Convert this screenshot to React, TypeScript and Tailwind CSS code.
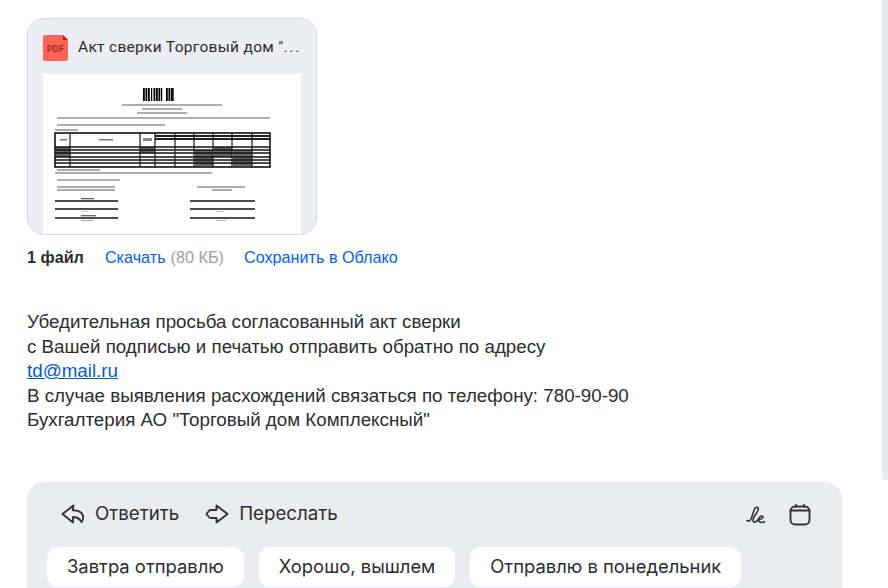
import React from 'react'

// Blurry preview of the attached PDF
function DocPreview() {
  const textLines = [
    [122, 105, 100],
    [142, 109, 40],
    [137, 113, 50],
    [57, 118, 213],
    [57, 125, 108],
    [55, 130, 23],
    [57, 170, 43],
    [55, 173, 157],
    [57, 180, 63],
    [57, 187, 58],
    [57, 190, 58],
    [197, 187, 48],
    [212, 190, 20],
  ]
  const barcode = [143, 145.5, 148, 151, 153.5, 156, 158.5, 161, 166, 168.5, 171, 172.5]
  const rows = [147, 150, 153, 157, 160, 163]
  const cols = [70, 140, 155, 175, 194, 213, 232, 252]
  const dark = [
    [56, 147, 14, 10],
    [195, 150, 18, 16],
    [214, 147, 18, 10],
    [233, 150, 19, 16],
    [140, 147, 15, 6],
  ]
  return (
    <svg width="258" height="160" viewBox="43 74 258 160" className="block bg-white">
      <defs>
        <filter id="soft">
          <feGaussianBlur stdDeviation="0.6" />
        </filter>
      </defs>
      <g filter="url(#soft)">
        {barcode.map((x, i) => (
          <rect key={x} x={x} y={88} width={i % 4 === 3 ? 1.2 : 1.8} height={13} fill="#000" />
        ))}
        {textLines.map(([x, y, w]) => (
          <rect key={`${x}-${y}`} x={x} y={y - 0.6} width={w} height={1.2} fill="#777" />
        ))}
        {dark.map(([x, y, w, h]) => (
          <rect key={`${x}-${y}`} x={x} y={y} width={w} height={h} fill="#666" />
        ))}
        <rect x={55} y={133} width={215} height={34} fill="none" stroke="#111" strokeWidth="1.6" />
        <line x1={155} y1={136} x2={270} y2={136} stroke="#222" strokeWidth="2" />
        <line x1={155} y1={139} x2={270} y2={139} stroke="#222" strokeWidth="2" />
        {rows.map((y) => (
          <line key={y} x1={55} y1={y} x2={270} y2={y} stroke="#111" strokeWidth="1.5" />
        ))}
        {cols.map((x) => (
          <line key={x} x1={x} y1={133} x2={x} y2={167} stroke="#222" strokeWidth="1.3" />
        ))}
        <rect x={60} y={139} width={7} height={1.5} fill="#777" />
        <rect x={99} y={139} width={14} height={1.5} fill="#777" />
        <rect x={143} y={138} width={9} height={3} fill="#888" />
        {[201, 209, 218].map((y) => (
          <g key={y}>
            <line x1={55} y1={y} x2={118} y2={y} stroke="#111" strokeWidth="1.5" />
            <line x1={190} y1={y} x2={255} y2={y} stroke="#111" strokeWidth="1.5" />
          </g>
        ))}
        <rect x={81} y={198} width={13} height={1.3} fill="#666" />
        <rect x={81} y={215} width={15} height={1.3} fill="#666" />
        <rect x={81} y={220} width={12} height={1} fill="#aaa" />
        <rect x={81} y={211} width={8} height={1} fill="#ccc" />
        <rect x={216} y={211} width={8} height={1} fill="#bbb" />
        <rect x={216} y={220} width={10} height={1} fill="#bbb" />
      </g>
    </svg>
  )
}

function PdfIcon() {
  return (
    <svg width="26" height="26" viewBox="0 0 26 26" className="shrink-0">
      <path d="M2 0h18l5 5v19a2 2 0 0 1-2 2H2a2 2 0 0 1-2-2V2a2 2 0 0 1 2-2z" fill="#ff6257" />
      <path d="M20 0l5 5h-5z" fill="#a3261d" />
      <text x="12.5" y="17" textAnchor="middle" fontSize="9.5" fontWeight="700" fill="#a82a20" fontFamily="Roboto, sans-serif">
        PDF
      </text>
    </svg>
  )
}

function ReplyIcon() {
  return (
    <svg width="24" height="20" viewBox="0 0 24 20" fill="none" stroke="#333" strokeWidth="1.9" strokeLinejoin="round" strokeLinecap="round">
      <path d="M12.5 1.5 1.5 10l10.5 8.5V13c3.5 0 6.500 1.500 8.500 5 1.500-1.500 2-3.500 1.500-6-.7-3.500-4.500-5.800-10.300-5.800z" />
    </svg>
  )
}

function ForwardIcon() {
  return (
    <svg width="24" height="20" viewBox="0 0 24 20" fill="none" stroke="#333" strokeWidth="1.9" strokeLinejoin="round" strokeLinecap="round">
      <path d="M11.5 1.5 22.5 10 11.5 18.5V14H6c-1 0-1.600-.3-2.200-1L1.500 10l2.300-3C4.400 6.300 5 6 6 6h5.500z" />
    </svg>
  )
}

function SignIcon() {
  return (
    <svg width="22" height="18" viewBox="0 0 22 18" fill="none" stroke="#333" strokeWidth="1.6" strokeLinecap="round" strokeLinejoin="round">
      <path d="M1 14.500c1.500 1 3 .5 4-1.500 1.200-2.500 2.200-6.500 3.500-10 .8-2 3.500-2.500 3.800-.5.300 2-2 5-4 8-1.500 2.300-2 5.500.2 5.500 2.500 0 4-3 5.500-5 1-1.300 3-1.300 3 0 0 1.500-2.500 2.500-4.300 2.500 0 2 1.300 3 3 3 1 0 2-.3 2.800-.8" />
    </svg>
  )
}

function CalendarIcon() {
  return (
    <svg width="22" height="22" viewBox="0 0 22 22" fill="none" stroke="#333" strokeWidth="1.9" strokeLinecap="round">
      <rect x="1.5" y="2.5" width="19" height="18" rx="4.5" />
      <path d="M1.500 6.500h19M7 1v1.500M15 1v1.500" />
    </svg>
  )
}

export default function App() {
  const quickReplies = ['Завтра отправлю', 'Хорошо, вышлем', 'Отправлю в понедельник']

  return (
    <div className="h-[588px] w-[888px] overflow-hidden bg-white flex">
      <div className="w-[882px] pl-[27px] pr-[40px] pt-[18px] font-['Liberation_Sans',sans-serif]">
        {/* Attachment card */}
        <div className="h-[217px] w-[290px] overflow-hidden rounded-[17px] border border-[#d5d8e0] bg-[#eceef3] px-[15px] pt-[14px]">
          <div className="mb-[11px] flex h-[30px] items-center gap-[9px]">
            <PdfIcon />
            <span className="whitespace-nowrap font-['Roboto',sans-serif] text-[15.5px] tracking-[0.3px] text-[#2c2d2e]">
              Акт сверки Торговый дом "<span className="tracking-[1.8px]">...</span>
            </span>
          </div>
          <DocPreview />
        </div>

        <div className="mt-[12px] flex h-[20px] items-center text-[16.2px] leading-[20px]">
          <span className="font-bold text-[#2c2d2e]">1 файл</span>
          <span className="ml-[21px] text-[#005ff9]">Скачать</span>
          <span className="ml-[5px] text-[#a0a0a0]">(80 КБ)</span>
          <span className="ml-[20px] text-[#005ff9]">Сохранить в Облако</span>
        </div>

        {/* Message body */}
        <div className="mt-[43px] text-[18.75px] leading-[24.5px] text-[#2c2d2e]">
          <p>Убедительная просьба согласованный акт сверки</p>
          <p>с Вашей подписью и печатью отправить обратно по адресу</p>
          <p className="text-[#005bd1] underline">td@mail.ru</p>
          <p>В случае выявления расхождений связаться по телефону: 780-90-90</p>
          <p>Бухгалтерия АО "Торговый дом Комплексный"</p>
        </div>

        {/* Reply panel */}
        <div className="mt-[49px] h-[140px] rounded-[17px] bg-[#ebecef] px-[20px] pt-[17px] font-['Inter',sans-serif] text-[#2c2d2e]">
          <div className="flex h-[32px] items-center">
            <div className="ml-[14px] flex items-center gap-[10px]">
              <ReplyIcon />
              <span className="text-[18.7px]">Ответить</span>
            </div>
            <div className="ml-[26px] flex items-center gap-[10px]">
              <ForwardIcon />
              <span className="text-[18.7px]">Переслать</span>
            </div>
            <div className="ml-auto mr-[11px] flex items-center gap-[21px]">
              <SignIcon />
              <CalendarIcon />
            </div>
          </div>
          <div className="mt-[16px] flex gap-[15px]">
            {quickReplies.map((text) => (
              <div key={text} className="flex h-[40px] items-center rounded-[11px] bg-white px-[20px] text-[18.4px]">
                {text}
              </div>
            ))}
          </div>
        </div>
      </div>

      {/* Scrollbar */}
      <div className="h-[480px] w-[6px] rounded-bl-[3px] bg-[#e9eaef]" />
    </div>
  )
}
